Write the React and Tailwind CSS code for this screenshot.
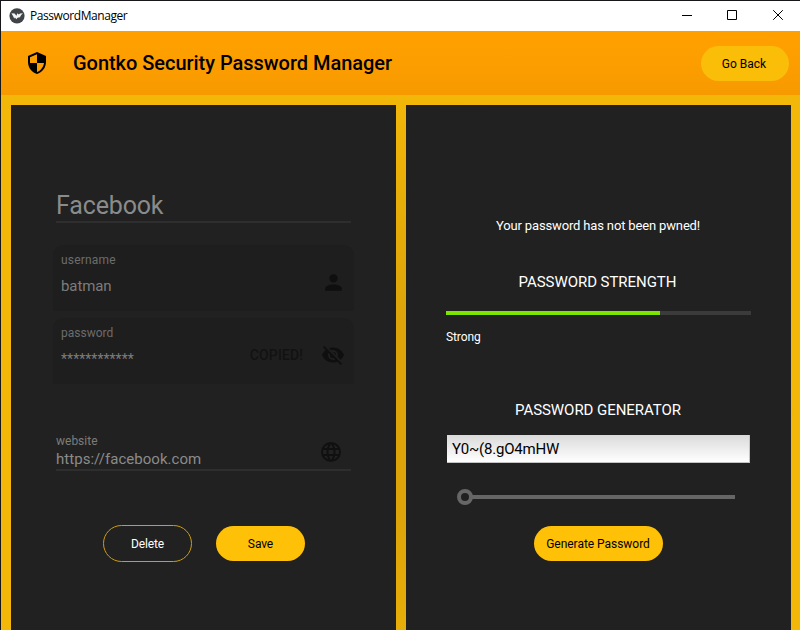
import React from "react";

function TitleBar() {
  return (
    <div className="flex h-[30px] shrink-0 items-center bg-white">
      <svg className="ml-2 block" width="16" height="16" viewBox="0 0 16 16">
        <circle cx="8" cy="7.8" r="7.6" fill="#414447" />
        <path d="M2.4 5.2 5.6 5.4 7.4 7.8 8.4 5.2 9.8 6.6 11 5.4 14 5.2 12.2 6.9 10.9 9.2 8.6 9.8 7.3 11.2 6 9.4 5.2 10.4 4 8z" fill="#f4f4f4" />
      </svg>
      <span className="ml-[5px] font-['Open_Sans','Noto_Sans',sans-serif] text-[12px] leading-[16px] tracking-[-0.43px] text-black">PasswordManager</span>
      <div className="ml-auto flex h-full items-center">
        <svg className="block" width="118" height="30" viewBox="0 0 118 30" fill="none" stroke="#000">
          <path d="M0 14.5h10M45.5 9.5h9v9h-9zM91.2 9.2l9.6 9.6M100.8 9.2l-9.6 9.6" />
        </svg>
      </div>
    </div>
  );
}

function Header() {
  return (
    <header className="flex h-16 shrink-0 items-center bg-linear-to-b from-[#ffa000] from-20% to-[#f79a00]">
      <svg className="ml-6 block" width="24" height="24" viewBox="0 0 24 24">
        <path d="M12 1 3 5v6c0 5.55 3.84 10.74 9 12 5.16-1.26 9-6.45 9-12V5l-9-4zm0 10.99h7c-.53 4.12-3.28 7.79-7 8.94V12H5V6.3l7-3.11v8.8z" />
      </svg>
      <h1 className="ml-6 text-[20px] leading-6 font-medium tracking-[-0.035px] text-black">Gontko Security Password Manager</h1>
      <button className="mr-[11px] ml-auto h-[35px] w-[88px] rounded-full bg-[#fabd08] pt-px pr-[2px] text-[12px] text-black">Go Back</button>
    </header>
  );
}

function Account() {
  return (
    <section className="flex w-[385px] flex-col bg-[#212121] pl-[42px] text-[#8b8b8b]">
      <div className="mt-[83px] ml-[3px] h-[35px] w-[295px] border-b-2 border-[#2e2e2e] text-[25px] leading-[35px] tracking-[-0.15px]">Facebook</div>

      <div className="mt-[22px] flex h-[66px] w-[301px] rounded-t-[10px] bg-[#1e1e1e]">
        <div className="ml-2 flex flex-col">
          <span className="mt-[7px] text-[12px] leading-4 tracking-[0.2px] text-[#6c6c6c]">username</span>
          <span className="mt-2 text-[15px] leading-5 tracking-[-0.1px] text-[#7c7c7c]">batman</span>
        </div>
        <svg className="mt-[25px] mr-[8px] ml-auto block" width="25" height="25" viewBox="0 0 24 24" fill="#0f0f0f">
          <path d="M12 4a4 4 0 1 1 0 8 4 4 0 0 1 0-8m0 10c4.42 0 8 1.79 8 4v2H4v-2c0-2.21 3.58-4 8-4z" />
        </svg>
      </div>

      <div className="mt-[7px] flex h-[66px] w-[301px] rounded-t-[10px] bg-[#1e1e1e]">
        <div className="ml-2 flex flex-col">
          <span className="mt-[7px] text-[12px] leading-4 text-[#6c6c6c]">password</span>
          <span className="mt-2 text-[14px] leading-5 tracking-[0.04px] text-[#7c7c7c]">************</span>
        </div>
        <span className="mt-[27px] mr-[18px] ml-auto text-[14px] leading-5 font-medium tracking-[0.1px] text-[#121212]">COPIED!</span>
        <svg className="mt-[25px] mr-[9px] block" width="24" height="24" viewBox="0 0 24 24" fill="#0f0f0f">
          <path d="M11.83 9 15 12.16V12a3 3 0 0 0-3-3h-.17m-4.3.8 1.55 1.55c-.05.21-.08.42-.08.65a3 3 0 0 0 3 3c.22 0 .44-.03.65-.08l1.55 1.55c-.67.33-1.41.53-2.2.53a5 5 0 0 1-5-5c0-.79.2-1.53.53-2.2M2 4.27l2.28 2.28.45.45C3.08 8.3 1.78 10 1 12c1.73 4.39 6 7.5 11 7.5 1.55 0 3.03-.3 4.38-.84l.43.42L19.73 22 21 20.73 3.27 3M12 7a5 5 0 0 1 5 5c0 .64-.13 1.26-.36 1.82l2.93 2.93c1.5-1.25 2.7-2.89 3.43-4.75-1.73-4.39-6-7.5-11-7.5-1.4 0-2.74.25-4 .7l2.17 2.15C10.74 7.13 11.35 7 12 7z" />
        </svg>
      </div>

      <div className="mt-[49px] ml-[3px] flex h-[38px] w-[295px] justify-between border-b-2 border-[#2e2e2e]">
        <div className="flex flex-col">
          <span className="text-[12px] leading-4 text-[#7c7c7c]">website</span>
          <span className="text-[15px] leading-5 tracking-[0.04px]">https://facebook.com</span>
        </div>
        <svg className="mt-[7px] mr-[8px] block" width="24" height="24" viewBox="0 0 24 24" fill="#101010">
          <path d="M16.36 14c.08-.66.14-1.32.14-2s-.06-1.34-.14-2h3.38c.16.64.26 1.31.26 2s-.1 1.36-.26 2m-5.15 5.56c.6-1.11 1.06-2.31 1.38-3.56h2.95a8.03 8.03 0 0 1-4.33 3.56M14.34 14H9.66c-.1-.66-.16-1.32-.16-2s.06-1.35.16-2h4.68c.09.65.16 1.32.16 2s-.07 1.34-.16 2M12 19.96c-.83-1.2-1.5-2.53-1.91-3.96h3.82c-.41 1.43-1.08 2.76-1.91 3.96M8 8H5.08A7.92 7.92 0 0 1 9.4 4.44C8.8 5.55 8.35 6.75 8 8m-2.92 8H8c.35 1.25.8 2.45 1.4 3.56A8 8 0 0 1 5.08 16m-.82-2C4.1 13.36 4 12.69 4 12s.1-1.36.26-2h3.38c-.08.66-.14 1.32-.14 2s.06 1.34.14 2M12 4.03c.83 1.2 1.5 2.54 1.91 3.97h-3.82c.41-1.43 1.08-2.77 1.91-3.97M18.92 8h-2.95a15.7 15.7 0 0 0-1.38-3.56c1.84.63 3.37 1.9 4.33 3.56M12 2a10 10 0 1 0 0 20 10 10 0 0 0 0-20z" />
        </svg>
      </div>

      <div className="mt-[54px] ml-[50px] flex gap-6">
        <button className="h-[37px] w-[89px] rounded-full border border-[#cf9c0c] pt-px text-[12px] tracking-[-0.1px] text-white">Delete</button>
        <button className="mt-px h-[35px] w-[89px] rounded-full bg-[#ffc107] text-[12px] tracking-[-0.1px] text-black">Save</button>
      </div>
    </section>
  );
}

function Strength() {
  return (
    <section className="flex w-[385px] flex-col bg-[#212121] px-10 text-white">
      <p className="mt-[111px] pr-px text-center text-[13px] leading-5 tracking-[-0.15px]">Your password has not been pwned!</p>
      <h2 className="mt-[36px] pr-[2px] text-center text-[15px] leading-5 tracking-[-0.05px]">PASSWORD STRENGTH</h2>
      <div className="mt-[19px] h-1 bg-[#3b3b3b]">
        <div className="h-full w-[70%] bg-[#7ee300]" />
      </div>
      <span className="mt-[14px] text-[12px] leading-4 tracking-[-0.1px]">Strong</span>
      <h2 className="mt-[55px] pr-px text-center text-[15px] leading-5 tracking-[-0.05px]">PASSWORD GENERATOR</h2>
      <div className="mx-px mt-[15px] h-7 border-r border-b border-[#c4c4c4] bg-linear-to-b from-[#dadada] to-white pl-[5px] text-[15px] leading-7 tracking-[-0.2px] text-black">Y0~(8.gO4mHW</div>
      <div className="mt-[26px] ml-[11px] flex h-4 items-center">
        <div className="size-4 rounded-full border-4 border-[#666]" />
        <div className="-ml-px h-1 w-[263px] bg-[#666]" />
      </div>
      <button className="mt-[21px] h-[35px] w-[129px] self-center rounded-full bg-[#ffc107] pr-px text-[12px] tracking-[-0.03px] text-black">Generate Password</button>
    </section>
  );
}

export default function App() {
  return (
    <div className="flex h-[630px] w-[800px] flex-col overflow-hidden bg-[#17171a] pt-px pl-px font-[Roboto,sans-serif]">
      <TitleBar />
      <Header />
      <main className="flex min-h-0 flex-1 gap-[10px] bg-radial-[50%_60%_at_50%_60%] from-[#dca408] from-30% to-[#f2b708] pt-[10px] pl-[10px]">
        <Account />
        <Strength />
      </main>
    </div>
  );
}
